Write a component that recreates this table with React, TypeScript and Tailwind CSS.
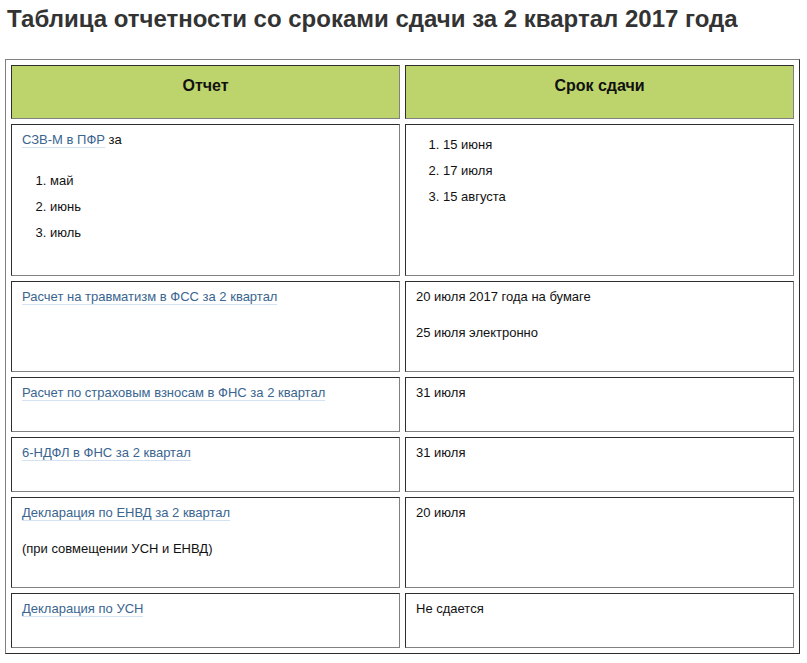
import type { ReactNode } from "react";

const cell =
  "w-1/2 border border-t-[#2e2e2e] border-l-[#2e2e2e] border-r-[#808080] border-b-[#808080] px-[10px] pt-[6px] pb-[11px] align-top text-left text-[13px] leading-[18px] font-normal text-[#111]";

const head =
  "w-1/2 border border-t-[#2e2e2e] border-l-[#2e2e2e] border-r-[#808080] border-b-[#808080] bg-[#bdd46c] px-[10px] pt-[11px] pb-[23px] align-top text-center text-[16px] leading-[18px] font-bold text-[#111]";

function Link({ children }: { children: ReactNode }) {
  return (
    <a href="#" className="text-[#3a6590] border-b border-[#d4e3ef]">
      {children}
    </a>
  );
}

const rows: { left: ReactNode; right: ReactNode }[] = [
  {
    left: (
      <>
        <p>
          <Link>СЗВ-М в ПФР</Link> за
        </p>
        <ol className="list-decimal pl-[28px] mt-[23px] mb-[22px] space-y-[8px]">
          <li>май</li>
          <li>июнь</li>
          <li>июль</li>
        </ol>
      </>
    ),
    right: (
      <ol className="list-decimal pl-[27px] mt-[5px] space-y-[8px]">
        <li>15 июня</li>
        <li>17 июля</li>
        <li>15 августа</li>
      </ol>
    ),
  },
  {
    left: (
      <p className="mb-[18px]">
        <Link>Расчет на травматизм в ФСС за 2 квартал</Link>
      </p>
    ),
    right: (
      <>
        <p className="mb-[18px]">20 июля 2017 года на бумаге</p>
        <p className="mb-[18px]">25 июля электронно</p>
      </>
    ),
  },
  {
    left: (
      <p className="mb-[18px]">
        <Link>Расчет по страховым взносам в ФНС за 2 квартал</Link>
      </p>
    ),
    right: <p className="mb-[18px]">31 июля</p>,
  },
  {
    left: (
      <p className="mb-[18px]">
        <Link>6-НДФЛ в ФНС за 2 квартал</Link>
      </p>
    ),
    right: <p className="mb-[18px]">31 июля</p>,
  },
  {
    left: (
      <>
        <p className="mb-[18px]">
          <Link>Декларация по ЕНВД за 2 квартал</Link>
        </p>
        <p className="mb-[18px]">(при совмещении УСН и ЕНВД)</p>
      </>
    ),
    right: <p className="mb-[18px]">20 июля</p>,
  },
  {
    left: (
      <p className="mb-[18px]">
        <Link>Декларация по УСН</Link>
      </p>
    ),
    right: <p className="mb-[18px]">Не сдается</p>,
  },
];

export default function App() {
  return (
    <div className="min-h-screen bg-white px-[5px] font-['Liberation_Sans',Arial,sans-serif]">
      {/* Title */}
      <h2 className="pt-[5px] pl-[2px] mb-[26px] text-[24px] leading-[28px] font-bold text-[#333]">
        Таблица отчетности со сроками сдачи за 2 квартал 2017 года
      </h2>

      {/* Report table */}
      <table className="w-[795px] table-fixed border-separate border-spacing-[5px] border border-t-[#808080] border-l-[#808080] border-r-[#2b2b2b] border-b-[#2b2b2b]">
        <thead>
          <tr>
            <th className={head}>Отчет</th>
            <th className={head}>Срок сдачи</th>
          </tr>
        </thead>
        <tbody>
          {rows.map((row, i) => (
            <tr key={i}>
              <td className={cell}>{row.left}</td>
              <td className={cell}>{row.right}</td>
            </tr>
          ))}
        </tbody>
      </table>
    </div>
  );
}
